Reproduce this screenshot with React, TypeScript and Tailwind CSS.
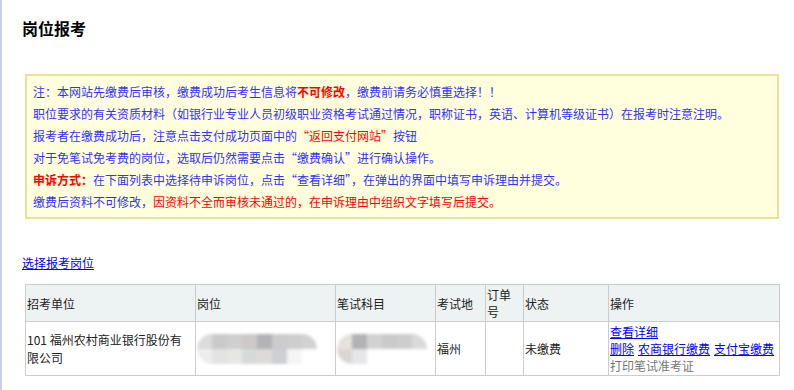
const font = { fontFamily: '"Microsoft YaHei", "Noto Sans CJK SC", "Liberation Sans", sans-serif' };

function Blur({ cells }: { cells: string[][] }) {
  return (
    <div className="flex flex-col blur-[1.5px] rounded-full overflow-hidden w-fit">
      {cells.map((row, i) => (
        <div key={i} className="flex">
          {row.map((c, j) => (
            <div key={j} className="h-[15px] w-[15px]" style={{ background: c }} />
          ))}
        </div>
      ))}
    </div>
  );
}

export default function App() {
  return (
    <div className="min-h-[390px] w-[794px] bg-white border-l-2 border-[#c3d3e4] text-[12px]" style={font}>
      <div className="pl-[20px] pt-[16px]">
        <h1 className="text-[16px] font-bold leading-[24px] text-black">岗位报考</h1>

        <div className="mt-[34px] ml-[3px] w-[754px] border-2 border-[#e8e19a] bg-[#ffffdd] pl-[6px] pt-[5px] pb-[4px] leading-[22px] text-[#3232ff]">
          <p>
            注：本网站先缴费后审核，缴费成功后考生信息将
            <span className="font-bold text-[#ff0000]">不可修改</span>
            ，缴费前请务必慎重选择！！
          </p>
          <p>职位要求的有关资质材料（如银行业专业人员初级职业资格考试通过情况，职称证书，英语、计算机等级证书）在报考时注意注明。</p>
          <p>
            报考者在缴费成功后，注意点击支付成功页面中的
            <span className="text-[#ff0000]">“返回支付网站”</span>按钮
          </p>
          <p>对于免笔试免考费的岗位，选取后仍然需要点击“缴费确认”进行确认操作。</p>
          <p>
            <span className="font-bold text-[#ff0000]">申诉方式：</span>
            在下面列表中选择待申诉岗位，点击“查看详细”，在弹出的界面中填写申诉理由并提交。
          </p>
          <p>
            缴费后资料不可修改，
            <span className="text-[#ff0000]">因资料不全而审核未通过的，在申诉理由中组织文字填写后提交。</span>
          </p>
        </div>

        <a href="#" className="mt-[35px] inline-block leading-[18px] text-[#0000ff] underline">
          选择报考岗位
        </a>

        <table className="mt-[12px] ml-[3px] border-collapse table-fixed w-[754px] text-[#222] leading-[17px]">
          <colgroup>
            <col className="w-[170px]" />
            <col className="w-[140px]" />
            <col className="w-[100px]" />
            <col className="w-[50px]" />
            <col className="w-[38px]" />
            <col className="w-[85px]" />
            <col className="w-[171px]" />
          </colgroup>
          <thead>
            <tr className="h-[37px] bg-[#edf2f2] text-left">
              {["招考单位", "岗位", "笔试科目", "考试地", "订单号", "状态", "操作"].map((h) => (
                <th key={h} className="border border-[#cccccc] px-[1px] font-normal">
                  {h}
                </th>
              ))}
            </tr>
          </thead>
          <tbody>
            <tr className="h-[54px]">
              <td className="border border-[#cccccc] pl-[1px] pr-[10px] leading-[18px]">101 福州农村商业银行股份有限公司</td>
              <td className="border border-[#cccccc] px-[1px]">
                <Blur
                  cells={[
                    ["#dcdcdc", "#cbcaca", "#cfcfcf", "#cbcac8", "#b3b3b5", "#cccccc", "#cfcece", "#d2d2d2"],
                    ["#ededed", "#e3e3e3", "#e6e6e5", "#d7d9d9", "#dcdbd8", "#cdcfd4", "#f5f5f6", "#ffffff"],
                  ]}
                />
              </td>
              <td className="border border-[#cccccc] px-[1px]">
                <Blur
                  cells={[
                    ["#e6e3de", "#b2b1b3", "#d2d2d2", "#cacaca", "#cdcdcd", "#dadada"],
                    ["#dad6d6", "#e6e6ea", "#ffffff", "#ffffff", "#ffffff", "#ffffff"],
                  ]}
                />
              </td>
              <td className="border border-[#cccccc] px-[1px]">福州</td>
              <td className="border border-[#cccccc] px-[1px]"></td>
              <td className="border border-[#cccccc] px-[1px]">未缴费</td>
              <td className="border border-[#cccccc] px-[1px] leading-[17px]">
                <div>
                  <a href="#" className="text-[#0000ff] underline">查看详细</a>
                </div>
                <div className="flex gap-[4px]">
                  <a href="#" className="text-[#0000ff] underline">删除</a>
                  <a href="#" className="text-[#0000ff] underline">农商银行缴费</a>
                  <a href="#" className="text-[#0000ff] underline">支付宝缴费</a>
                </div>
                <div className="text-[#777]">打印笔试准考证</div>
              </td>
            </tr>
          </tbody>
        </table>
      </div>
    </div>
  );
}
